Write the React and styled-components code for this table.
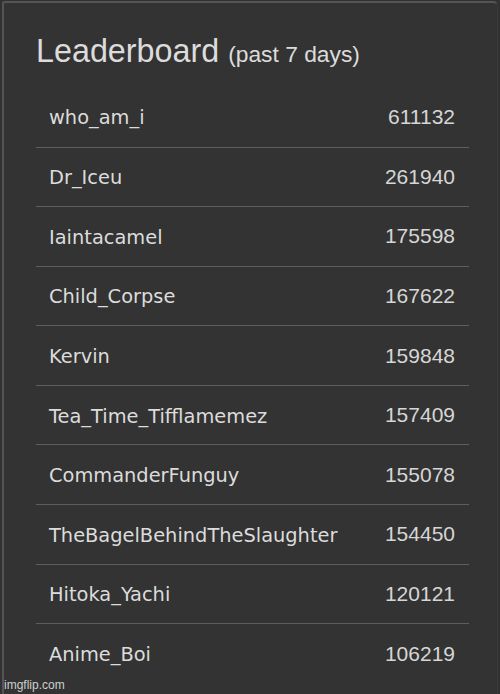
import React from "react";
import styled, { createGlobalStyle } from "styled-components";

const Global = createGlobalStyle`
  html, body { margin: 0; padding: 0; background: #323232; }
  body { width: 500px; height: 694px; overflow: hidden; }
`;

const Page = styled.div`
  position: relative;
  width: 500px;
  height: 694px;
  background: #323232;
  padding: 1px 0 0 2px;
  box-sizing: border-box;
`;

const Panel = styled.section`
  box-sizing: border-box;
  width: 496px;
  height: 693px;
  border-top: 2px solid #555;
  border-left: 2px solid #555;
  border-right: 1px solid #3a3a3a;
  border-top-right-radius: 5px;
  border-top-left-radius: 3px;
  background: #333333;
  padding: 28px 28px 0 32px;
`;

const Title = styled.h2`
  margin: 0;
  font-family: "Liberation Sans", Arial, sans-serif;
  font-weight: normal;
  font-size: 32.3px;
  line-height: 40px;
  color: #dcdcdc;
`;

const Sub = styled.span`
  font-size: 22.8px;
`;

const List = styled.ol`
  list-style: none;
  margin: 13px 0 0 0;
  padding: 0;
`;

const Row = styled.li`
  box-sizing: border-box;
  height: ${(p) => (p.$first ? "59.5px" : "59.6px")};
  display: flex;
  align-items: center;
  justify-content: space-between;
  padding: 0 14px 0 13px;
  border-top: ${(p) => (p.$first ? "none" : "1.5px solid #5e5e5e")};
`;

const Name = styled.span`
  font-family: "DejaVu Sans", Verdana, sans-serif;
  font-size: 19.4px;
  line-height: 24px;
  margin-top: 3px;
  color: #dcdcdc;
`;

const Score = styled.span`
  font-family: "Liberation Sans", Arial, sans-serif;
  font-size: 21px;
  line-height: 24px;
  color: #d6d6d6;
`;

const Watermark = styled.span`
  position: absolute;
  left: 4px;
  bottom: 2px;
  font-family: "Liberation Sans", Arial, sans-serif;
  font-size: 12px;
  color: #cfcfcf;
`;

const data = [
  ["who_am_i", "611132"],
  ["Dr_Iceu", "261940"],
  ["Iaintacamel", "175598"],
  ["Child_Corpse", "167622"],
  ["Kervin", "159848"],
  ["Tea_Time_Tifflamemez", "157409"],
  ["CommanderFunguy", "155078"],
  ["TheBagelBehindTheSlaughter", "154450"],
  ["Hitoka_Yachi", "120121"],
  ["Anime_Boi", "106219"],
];

export default function App() {
  return (
    <>
      <Global />
      <Page>
        <Panel>
          <Title>
            Leaderboard <Sub>(past 7 days)</Sub>
          </Title>
          <List>
            {data.map(([n, s], i) => (
              <Row key={n} $first={i === 0}>
                <Name>{n}</Name>
                <Score>{s}</Score>
              </Row>
            ))}
          </List>
        </Panel>
        <Watermark>imgflip.com</Watermark>
      </Page>
    </>
  );
}
